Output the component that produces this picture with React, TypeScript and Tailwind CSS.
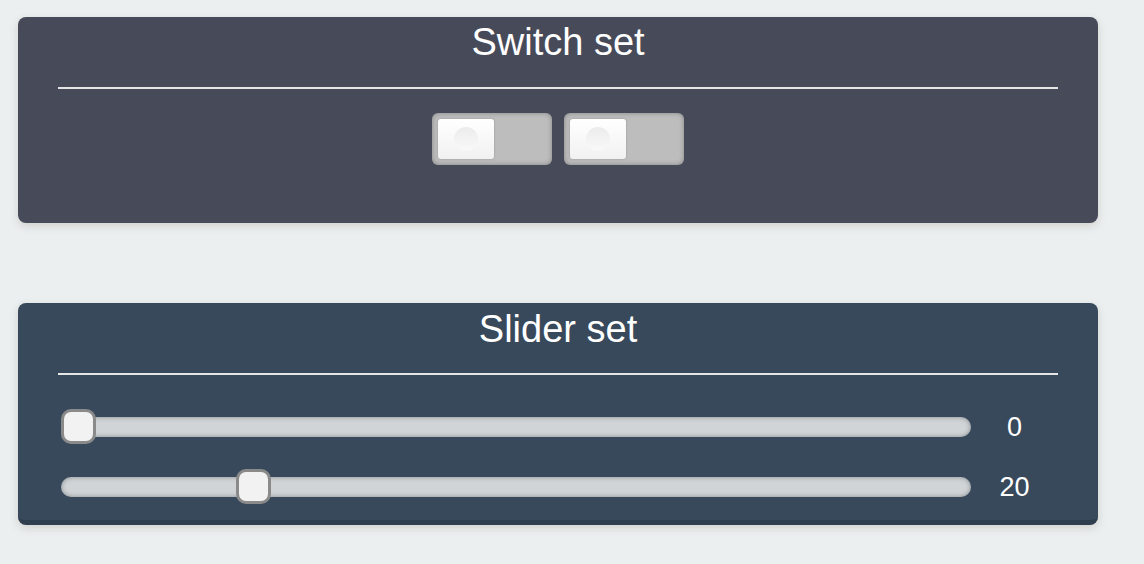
import React from "react";

function Switch() {
  return (
    <div className="w-[120px] h-[52px] rounded-[6px] bg-[#bdbdbd] shadow-[inset_0_0_5px_rgba(0,0,0,0.3)] p-[6px] flex">
      <div className="w-[56px] h-[40px] rounded-[3px] bg-gradient-to-b from-[#ffffff] to-[#f1f1f1] shadow-[0_0_2px_rgba(0,0,0,0.25)] flex items-center justify-center">
        <div className="w-[24px] h-[24px] rounded-full bg-gradient-to-b from-[#ececec] to-[#f9f9f9]" />
      </div>
    </div>
  );
}

function Slider({ value }: { value: number }) {
  return (
    <div className="h-[40px] flex items-center pl-[3px]">
      <div className="relative flex-1 h-[20px] rounded-full bg-[#d0d4d7] shadow-[inset_0_0_5px_rgba(0,0,0,0.35)]">
        <div
          className="absolute top-[-8px] w-[35px] h-[35px] rounded-[10px] border-[3px] border-[#8a8a8a] bg-[#f2f2f2]"
          style={{ left: `calc((100% - 35px) * ${value / 100})` }}
        />
      </div>
      <div className="w-[87px] text-center text-white text-[27px] leading-none">{value}</div>
    </div>
  );
}

export default function App() {
  return (
    <div
      className="min-h-[564px] bg-[#ebeff0] pt-[17px] pl-[18px]"
      style={{ fontFamily: '"Liberation Sans", Arial, sans-serif' }}
    >
      <div className="w-[1080px] flex flex-col gap-[80px]">
        <div className="h-[206px] rounded-[8px] bg-[#474a59] px-[40px] shadow-[0_3px_8px_rgba(90,80,50,0.18)]">
          <div className="h-[51px] flex items-center justify-center text-white text-[38px] leading-[51px]">
            Switch set
          </div>
          <div className="mt-[19px] h-[2px] bg-[#e6e6e6]" />
          <div className="mt-[24px] flex justify-center gap-[12px]">
            <Switch />
            <Switch />
          </div>
        </div>
        <div className="h-[222px] rounded-[8px] bg-[#38495b] border-b-[5px] border-[#2f3e4f] px-[40px] shadow-[0_3px_8px_rgba(90,80,50,0.18)]">
          <div className="h-[52px] flex items-center justify-center text-white text-[38px] leading-[52px]">
            Slider set
          </div>
          <div className="mt-[18px] h-[2px] bg-[#e6e6e6]" />
          <div className="mt-[32px] flex flex-col gap-[20px]">
            <Slider value={0} />
            <Slider value={20} />
          </div>
        </div>
      </div>
    </div>
  );
}
